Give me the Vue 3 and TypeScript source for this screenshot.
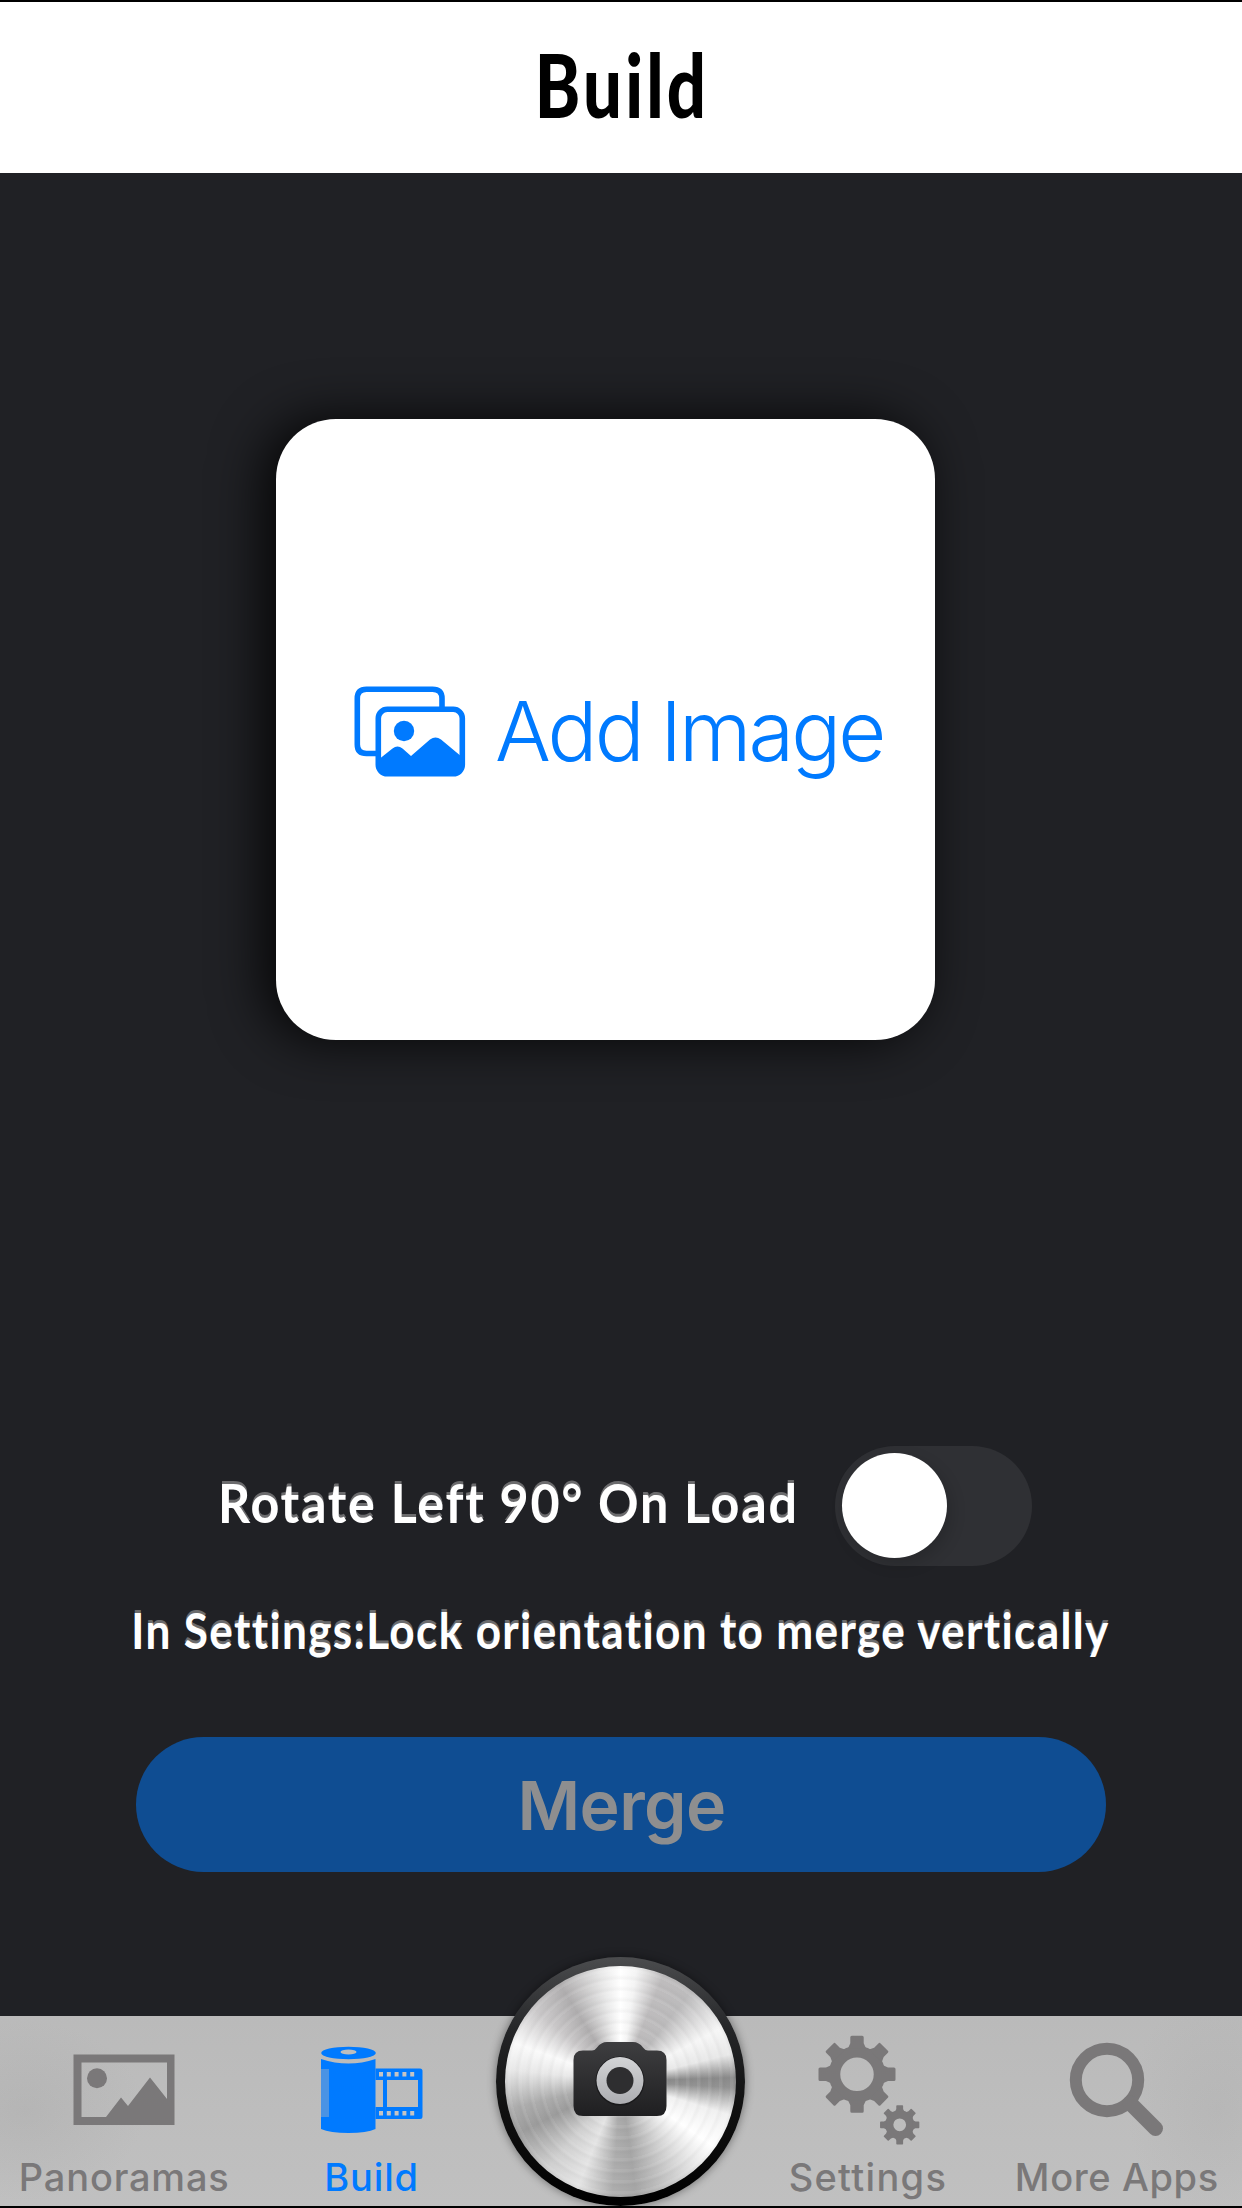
<script setup lang="ts">
interface Tab {
  id: string
  label: string
  active?: boolean
}

const tabs: Tab[] = [
  { id: 'panoramas', label: 'Panoramas' },
  { id: 'build', label: 'Build', active: true },
  { id: 'camera', label: '' },
  { id: 'settings', label: 'Settings' },
  { id: 'more', label: 'More Apps' },
]

const teeth = [0, 45, 90, 135, 180, 225, 270, 315]
const holes = [60, 67.8, 75.6, 83.4, 91.2]
</script>

<template>
  <div class="screen">
    <header class="header"><h1 class="title">Build</h1></header>

    <main class="content">
      <button class="card">
        <svg class="card-icon" width="112" height="92" viewBox="0 0 112 92">
          <g fill="none" stroke="#007aff" stroke-width="5.6">
            <path d="M22 67.5H12.5Q3.3 67.5 3.3 58.5V12.5Q3.3 3.3 12.5 3.3H78.500Q88 3.300 88 12.500V21" />
            <rect x="24.300" y="23.300" width="84" height="64.500" rx="9" />
          </g>
          <path d="M24 74L38.500 62.500Q43.500 58.500 48.500 62.500L57 70L76 53.500Q81.500 49.500 87 53.500L108 71V80Q108 88 99 88H33Q24 88 24 80Z" fill="#007aff" />
          <circle cx="50" cy="45" r="10.200" fill="#007aff" />
        </svg>
        <span class="card-label">Add Image</span>
      </button>

      <div class="rotate-row">
        <span class="rotate-label">Rotate Left 90° On Load</span>
        <span class="switch"><span class="knob"></span></span>
      </div>
      <p class="hint">In Settings:Lock orientation to merge vertically</p>
      <button class="merge"><span>Merge</span></button>
    </main>

    <nav class="tabbar">
      <div v-for="tab in tabs" :key="tab.id" class="tab" :class="[tab.id, { active: tab.active }]">
        <svg v-if="tab.id === 'panoramas'" class="tab-icon" width="102" height="110" viewBox="0 0 102 110">
          <path d="M0.500 28.500H101.500V99H0.500ZM8.500 36.500V91H33L48 71.500L55 80L77 51.500L94 73V36.500Z" fill="currentColor" fill-rule="evenodd" />
          <circle cx="24" cy="52.300" r="10" fill="currentColor" />
        </svg>
        <svg v-else-if="tab.id === 'build'" class="tab-icon" width="102" height="110" viewBox="0 0 102 110">
          <ellipse cx="27.500" cy="27" rx="27.300" ry="6.300" fill="currentColor" />
          <ellipse cx="27.500" cy="26" rx="8" ry="2.600" fill="#bebebe" />
          <path d="M0 33Q27.500 42 54.500 33V103Q46 107 27.500 107T0 103Z" fill="currentColor" />
          <rect x="0" y="43" width="8" height="48" fill="#4a93e4" />
          <path d="M54.500 42.500H99Q101.500 42.500 101.500 45V90.500Q101.500 93 99 93H54.500V81H62V54H54.500ZM66 54V81H97V54Z" fill="currentColor" fill-rule="evenodd" />
          <g fill="#c4c4c4">
            <rect v-for="x in holes" :key="'t' + x" :x="x - 2" y="46" width="4" height="4.500" />
            <rect v-for="x in holes" :key="'b' + x" :x="x - 2" y="85" width="4" height="4.500" />
          </g>
        </svg>
        <svg v-else-if="tab.id === 'settings'" class="tab-icon" width="102" height="110" viewBox="0 0 102 110">
          <g transform="translate(39 48.300)">
            <circle r="22.500" fill="none" stroke="currentColor" stroke-width="11.500" />
            <path v-for="a in teeth" :key="a" d="M-9 -26L-6.700 -31V-37Q-6.700 -38.500 -5.200 -38.500H5.200Q6.700 -38.500 6.700 -37V-31L9 -26Z" :transform="`rotate(${a})`" fill="currentColor" />
          </g>
          <g transform="translate(81.700 98.800) scale(0.510)">
            <circle r="20.500" fill="none" stroke="currentColor" stroke-width="16" />
            <path v-for="a in teeth" :key="a" d="M-9 -26L-6.700 -31V-37Q-6.700 -38.500 -5.200 -38.500H5.200Q6.700 -38.500 6.700 -37V-31L9 -26Z" :transform="`rotate(${a})`" fill="currentColor" />
          </g>
        </svg>
        <svg v-else-if="tab.id === 'more'" class="tab-icon" width="102" height="110" viewBox="0 0 102 110">
          <circle cx="41" cy="54" r="31.200" fill="none" stroke="currentColor" stroke-width="12" />
          <path d="M64 77L89.500 102.500" stroke="currentColor" stroke-width="15" stroke-linecap="round" />
        </svg>
        <span v-if="tab.label" class="tab-label">{{ tab.label }}</span>
      </div>

      <button class="shutter" aria-label="Camera">
        <span class="disc">
          <svg class="camera" width="94" height="76" viewBox="0 0 94 76">
            <defs>
              <linearGradient id="bodyFill" x1="0" y1="0" x2="0" y2="1">
                <stop offset="0" stop-color="#3e3e40" />
                <stop offset="1" stop-color="#1f1f21" />
              </linearGradient>
              <linearGradient id="ringFill" x1="0" y1="0" x2="0" y2="1">
                <stop offset="0" stop-color="#d3d4d6" />
                <stop offset="1" stop-color="#acadb1" />
              </linearGradient>
            </defs>
            <path d="M10 9.500H19Q22 9.500 24 6.500Q28 1 34 1H60Q66 1 70 6.500Q72 9.500 75 9.500H84Q93.500 9.500 93.500 19V65Q93.500 75 84 75H10Q0.500 75 0.500 65V19Q0.500 9.500 10 9.500Z" fill="url(#bodyFill)" />
            <circle cx="47" cy="40" r="24.500" fill="#19191b" />
            <circle cx="47" cy="39.500" r="23.500" fill="url(#ringFill)" />
            <circle cx="47" cy="39.500" r="13.500" fill="#2e2e30" />
          </svg>
        </span>
      </button>
    </nav>
  </div>
</template>

<style>
body {
  margin: 0;
  background: #000;
}
</style>

<style scoped>
.screen {
  box-sizing: border-box;
  width: 1242px;
  height: 2208px;
  padding: 2px 0;
  display: flex;
  flex-direction: column;
  background: #000;
  overflow: hidden;
  font-family: Inter, "Liberation Sans", sans-serif;
}
button {
  border: 0;
  padding: 0;
  font-family: inherit;
}
.header {
  height: 171px;
  display: flex;
  justify-content: center;
  background: #fff;
}
.title {
  margin: 0;
  padding-left: 3px;
  font: 900 87px/166px Lato, sans-serif;
  height: 166px;
  letter-spacing: 4px;
  color: #000;
  transform: scaleX(0.79);
}
.content {
  flex: 1;
  display: flex;
  flex-direction: column;
  align-items: center;
  background: #202125;
}
.card {
  box-sizing: border-box;
  width: 659px;
  height: 621px;
  margin: 246px 31px 0 0;
  padding-left: 78px;
  display: flex;
  align-items: center;
  border-radius: 60px;
  background: #fff;
  box-shadow: -12px 0 52px rgba(0, 0, 0, 0.86);
}
.card-icon {
  flex: none;
  margin-top: 4px;
}
.card-label {
  margin: 2px 0 0 29px;
  font-size: 83px;
  font-weight: 300;
  line-height: 100px;
  letter-spacing: -2.9px;
  word-spacing: -2px;
  white-space: nowrap;
  color: #007aff;
}
.rotate-row {
  width: 814px;
  height: 120px;
  margin: 406px 0 0 7px;
  display: flex;
  justify-content: space-between;
  align-items: center;
}
.rotate-label,
.hint {
  font-family: Lato, sans-serif;
  font-weight: 700;
  white-space: nowrap;
  color: #fff;
  text-shadow: 0 -3px 0 #6b6b6d;
}
.rotate-label {
  width: 600px;
  margin-bottom: 6px;
  font-size: 54px;
  line-height: 60px;
  letter-spacing: 1.9px;
  transform: scaleX(0.93);
  transform-origin: 0 50%;
}
.switch {
  box-sizing: border-box;
  flex: none;
  width: 197px;
  height: 120px;
  padding: 7px;
  border-radius: 60px;
  background: #2f3034;
}
.knob {
  display: block;
  width: 105px;
  height: 105px;
  border-radius: 50%;
  background: #fff;
  box-shadow: 4px 6px 16px rgba(0, 0, 0, 0.16);
}
.hint {
  height: 60px;
  margin: 34px 0 0;
  font-size: 49px;
  line-height: 60px;
  letter-spacing: 1.5px;
  transform: scaleX(0.9);
}
.merge {
  width: 970px;
  height: 135px;
  margin-top: 77px;
  padding: 1px 0 0 1px;
  border-radius: 68px;
  background: #0f4d92;
  color: #8e8e8f;
  font-size: 68px;
  font-weight: 600;
  line-height: 134px;
  letter-spacing: -0.6px;
}
.tabbar {
  position: relative;
  height: 190px;
  display: grid;
  grid-template-columns: repeat(5, 1fr);
  background:
    radial-gradient(ellipse 120px 90px at 2% 50%, rgba(150, 150, 150, 0.2), transparent),
    radial-gradient(ellipse 90px 120px at 98% 50%, rgba(150, 150, 150, 0.15), transparent),
    linear-gradient(#bababa, #c0c0c0);
}
.tab {
  display: flex;
  flex-direction: column;
  align-items: center;
  padding-top: 10px;
  color: #7a7879;
}
.tab.active {
  color: #007aff;
}
.tab.build,
.tab.more {
  padding-right: 2px;
}
.tab-icon {
  flex: none;
  overflow: visible;
}
.tab-label {
  margin-top: 18px;
  font-size: 38px;
  font-weight: 500;
  line-height: 46px;
  letter-spacing: 0.8px;
  white-space: nowrap;
}
.settings .tab-label {
  margin-right: 3px;
  letter-spacing: 1.3px;
}
.more .tab-label {
  letter-spacing: 0.6px;
}
.shutter {
  position: absolute;
  left: 496px;
  bottom: 0;
  width: 249px;
  height: 249px;
  display: grid;
  place-items: center;
  border-radius: 50%;
  background: linear-gradient(#4b4c4e, #242527 30%, #111 60%, #000);
  box-shadow: 0 0 10px rgba(0, 0, 0, 0.45);
}
.disc {
  width: 231px;
  height: 231px;
  display: grid;
  place-items: center;
  border-radius: 50%;
  background:
    repeating-radial-gradient(circle, rgba(255, 255, 255, 0.07) 0 2px, rgba(90, 90, 90, 0.04) 4px 5px, transparent 8px 11px),
    conic-gradient(#fff 0deg, #f4f4f4 8deg, #bebcbd 22deg, #bcbbbc 38deg, #f6f6f6 62deg, #e8e8e8 76deg, #8a8a8a 88deg, #929292 93deg, #f0f0f0 107deg, #fff 125deg, #d4d4d4 148deg, #a6a6a6 172deg, #adadad 184deg, #e4e4e4 202deg, #d0d0d0 220deg, #9c9c9c 243deg, #acacac 256deg, #e8e8e8 276deg, #fafafa 290deg, #cac8c9 310deg, #b0aeaf 328deg, #eaeaea 350deg, #fff 360deg);
}
.camera {
  margin: 0 1px 6px 0;
}
</style>
